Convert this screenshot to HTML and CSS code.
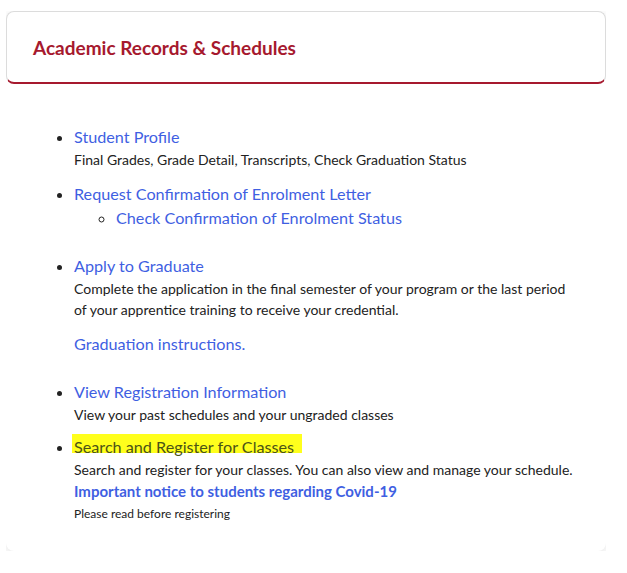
FILE: index.html
```html
<!DOCTYPE html>
<html lang="en">
<head>
<meta charset="utf-8">
<title>Academic Records &amp; Schedules</title>
<link rel="stylesheet" href="styles.css">
</head>
<body>
<section class="card">
  <header class="card-header">
    <h2 class="card-title">Academic Records &amp; Schedules</h2>
  </header>
  <div class="card-body">
    <ul class="menu">
      <li class="item">
        <a class="link" href="#">Student Profile</a>
        <p class="desc">Final Grades, Grade Detail, Transcripts, Check Graduation Status</p>
      </li>
      <li class="item item-spaced">
        <a class="link" href="#">Request Confirmation of Enrolment Letter</a>
        <ul class="submenu">
          <li><a class="link" href="#">Check Confirmation of Enrolment Status</a></li>
        </ul>
      </li>
      <li class="item item-spaced">
        <a class="link" href="#">Apply to Graduate</a>
        <p class="desc">Complete the application in the final semester of your program or the last period of your apprentice training to receive your credential.</p>
        <p class="extra"><a class="link" href="#">Graduation instructions.</a></p>
      </li>
      <li class="item item-tight">
        <a class="link" href="#">View Registration Information</a>
        <p class="desc">View your past schedules and your ungraded classes</p>
      </li>
      <li class="item item-last">
        <a class="link link-marked" href="#"><span class="mark">Search and Register for Classes</span></a>
        <p class="desc">Search and register for your classes. You can also view and manage your schedule.</p>
        <a class="notice" href="#">Important notice to students regarding Covid-19</a>
        <p class="small">Please read before registering</p>
      </li>
    </ul>
  </div>
</section>
</body>
</html>
```
FILE: styles.css
```css
html, body {
  background: #ffffff;
}

body {
  margin: 11px 21px 0 6px;
  font-family: "Lato", "Liberation Sans", sans-serif;
  color: #222222;
}

.card {
  width: 600px;
  background: #ffffff;
  border-radius: 8px;
  box-shadow: 0 3px 12px rgba(0, 0, 0, 0.11);
}

.card-header {
  border: 1px solid #dcdcdc;
  border-bottom: 2px solid #a6192e;
  border-radius: 8px;
  padding: 24px 26px 22px;
}

.card-title {
  margin: 0;
  font-size: 19px;
  line-height: 24px;
  font-weight: 700;
  color: #a6192e;
}

.card-body {
  padding: 41px 27px 26px;
}

.menu {
  margin: 0;
  padding-left: 41px;
  list-style: disc;
}

.item {
  margin-bottom: 12px;
}

.item-spaced {
  margin-bottom: 24px;
}

.item-tight {
  margin-bottom: 10px;
}

.item-last {
  margin-bottom: 0;
}

.link {
  font-size: 16.2px;
  line-height: 24px;
  color: #3f5fe2;
  text-decoration: none;
}

.desc {
  margin: 0;
  font-size: 14px;
  line-height: 21px;
  color: #222222;
}

.extra {
  margin: 12px 0 0;
  line-height: 24px;
}

.submenu {
  margin: 0;
  padding-left: 42px;
  list-style: circle;
  line-height: 24px;
}

.link-marked {
  color: #4b5317;
}

.mark {
  position: relative;
  z-index: 0;
}

.mark::before {
  content: "";
  position: absolute;
  left: -2px;
  right: -8px;
  top: -3px;
  bottom: 3px;
  background: #ffff1c;
  z-index: -1;
}

.notice {
  display: block;
  font-size: 15px;
  line-height: 23px;
  font-weight: 700;
  color: #3f5fe2;
  text-decoration: none;
}

.small {
  margin: 0;
  font-size: 12px;
  line-height: 22px;
  color: #222222;
}
```
